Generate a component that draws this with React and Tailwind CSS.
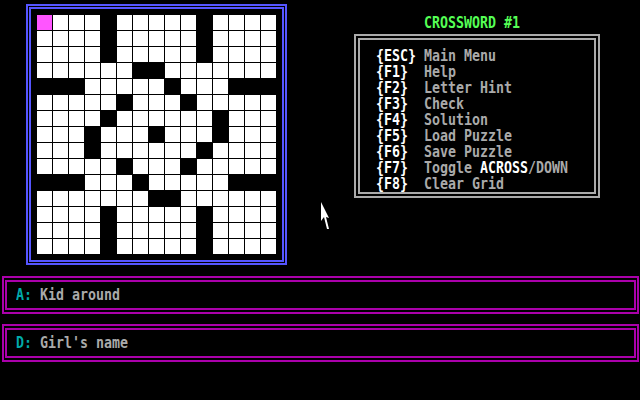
import React from 'react';

// 15x15 puzzle layout, '#' = blocked square
const GRID = [
  '....#.....#....',
  '....#.....#....',
  '....#.....#....',
  '......##.......',
  '###.....#...###',
  '.....#...#.....',
  '....#......#...',
  '...#...#...#...',
  '...#......#....',
  '.....#...#.....',
  '###...#.....###',
  '.......##......',
  '....#.....#....',
  '....#.....#....',
  '....#.....#....',
];

const MENU = [
  { key: '{ESC}', label: 'Main Menu' },
  { key: '{F1}', label: 'Help' },
  { key: '{F2}', label: 'Letter Hint' },
  { key: '{F3}', label: 'Check' },
  { key: '{F4}', label: 'Solution' },
  { key: '{F5}', label: 'Load Puzzle' },
  { key: '{F6}', label: 'Save Puzzle' },
  { key: '{F7}', label: 'Toggle ', hi: 'ACROSS', rest: '/DOWN' },
  { key: '{F8}', label: 'Clear Grid' },
];

// one 8x16 text row, glyphs stretched to look like the EGA font
function Line({ children, className = '' }) {
  return (
    <div className={`h-4 leading-4 whitespace-pre ${className}`}>
      <span className="inline-block leading-[12.8px] scale-y-125">{children}</span>
    </div>
  );
}

function Board() {
  return (
    <div className="ml-[26px] border-2 border-[#5555ff] p-[1px]">
      <div className="border-2 border-[#5555ff] p-[6px]">
        <div className="grid grid-cols-[repeat(15,15px)] grid-rows-[repeat(15,15px)] gap-[1px]">
          {GRID.map((row, r) =>
            row.split('').map((c, i) => (
              <div
                key={`${r}-${i}`}
                className={
                  r === 0 && i === 0
                    ? 'bg-[#ff55ff]'
                    : c === '#'
                      ? 'bg-black'
                      : 'bg-white'
                }
              />
            ))
          )}
        </div>
      </div>
    </div>
  );
}

function Menu() {
  return (
    <div className="w-[246px] border-2 border-[#aaaaaa] p-[2px]">
      <div className="border-2 border-[#aaaaaa] pl-4 pt-2 pb-1 h-[156px]">
        {MENU.map((m) => (
          <Line key={m.key} className="text-[#aaaaaa]">
            <span className="text-white">{m.key.padEnd(6, ' ')}</span>
            {m.label}
            {m.hi && <span className="text-white">{m.hi}</span>}
            {m.rest}
          </Line>
        ))}
      </div>
    </div>
  );
}

function ClueBox({ dir, text, className = '' }) {
  return (
    <div className={`ml-[2px] w-[637px] border-2 border-[#aa00aa] py-[2px] px-[1px] ${className}`}>
      <div className="h-[30px] border-2 border-[#aa00aa] flex items-center pl-[9px]">
        <Line className="text-[#aaaaaa]">
          <span className="text-[#00aaaa]">{dir}: </span>
          {text}
        </Line>
      </div>
    </div>
  );
}

export default function App() {
  return (
    <div className="relative w-[640px] h-[400px] overflow-hidden bg-black font-['DejaVu_Sans_Mono',monospace] text-[13.29px] font-bold">
      <div className="flex items-start h-[276px] pt-[4px]">
        <Board />
        <div className="ml-[67px]">
          <Line className="mt-[11px] ml-[70px] text-[#55ff55]">CROSSWORD #1</Line>
          <div className="mt-[3px]">
            <Menu />
          </div>
        </div>
      </div>

      <ClueBox dir="A" text="Kid around" />
      <ClueBox dir="D" text="Girl's name" className="mt-[10px]" />

      {/* mouse pointer */}
      <svg
        className="absolute left-[321px] top-[202px]"
        width="9"
        height="28"
        viewBox="0 0 9 28"
      >
        <path d="M0 0 L0 19 L3 15 L6 27 L8 27 L5 15 L8 16 Z" fill="#fff" />
      </svg>
    </div>
  );
}
